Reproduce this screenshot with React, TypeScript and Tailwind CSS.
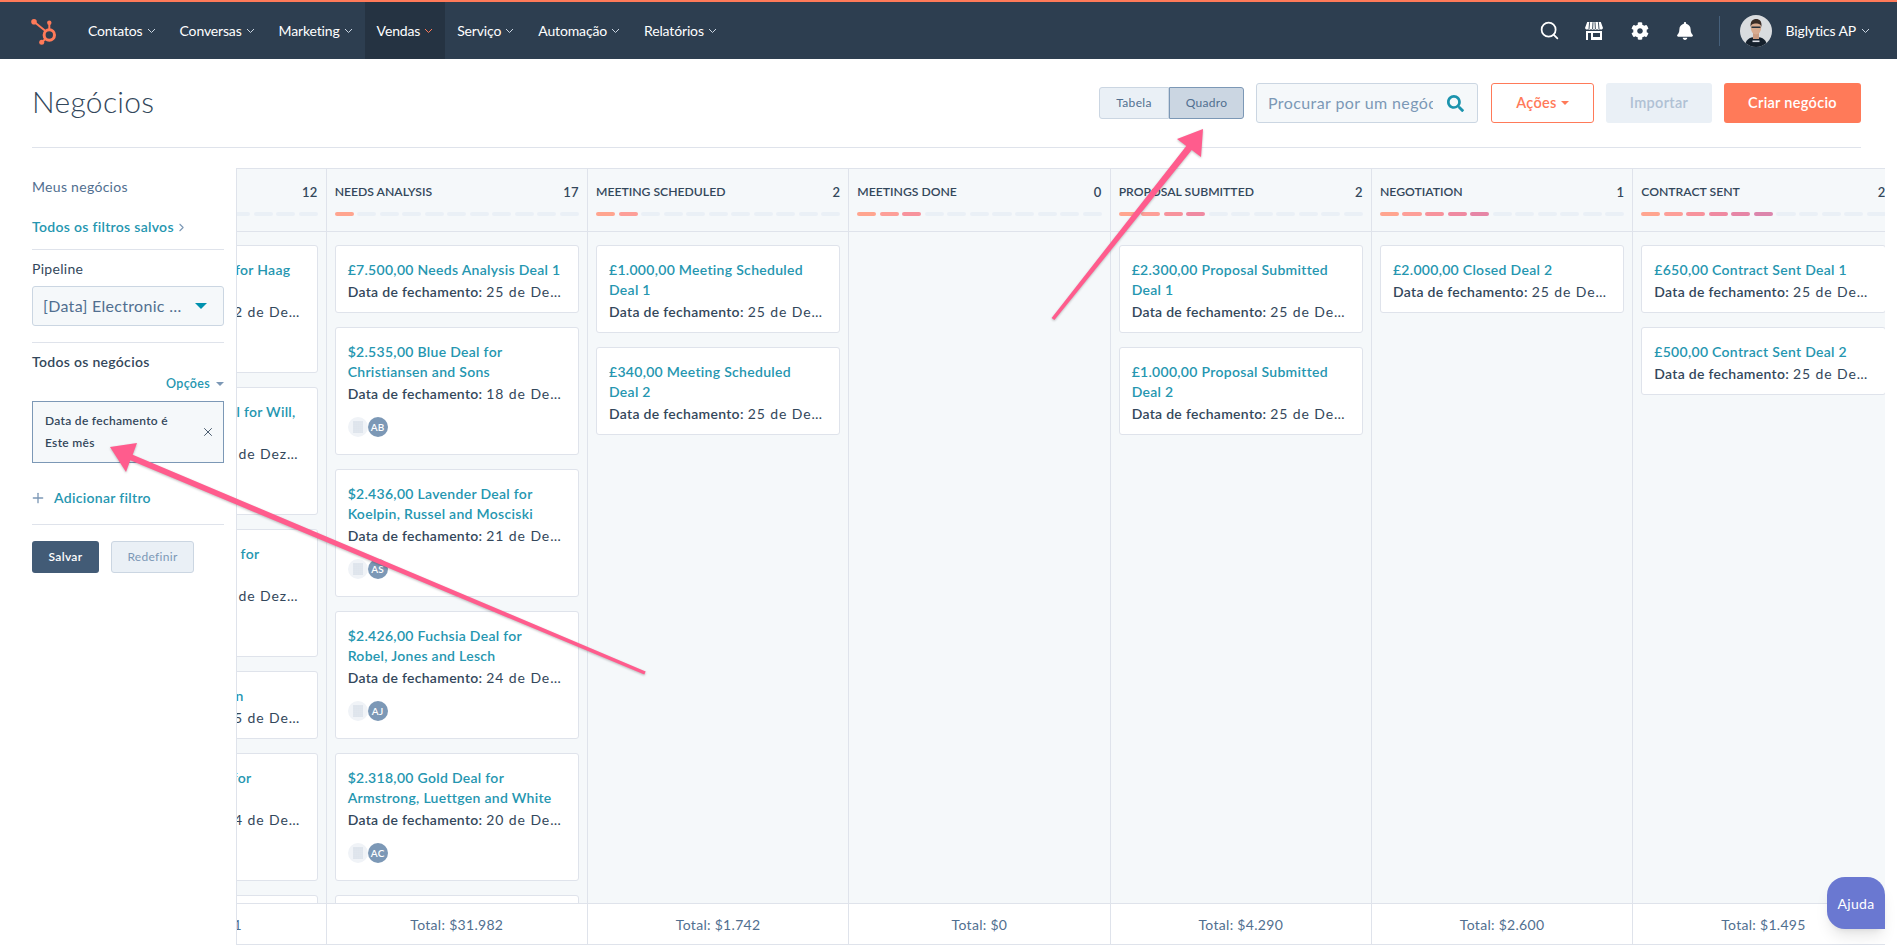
import { ChevronRight, Plus, Search, X } from "lucide-react";
import { FaBell, FaCog, FaSearch } from "react-icons/fa";

type Deal = {
  title: string;
  date: string;
  initials?: string;
};

type Stage = {
  name: string;
  count: number;
  lit: number;
  total: string;
  deals: Deal[];
};

const SEGMENT_COLORS = ["bg-[#ffa58f]", "bg-[#fd9f98]", "bg-[#f7939c]", "bg-[#ef8aa1]", "bg-[#e686a6]", "bg-[#dc86ac]"];

const NAV_ITEMS = ["Contatos", "Conversas", "Marketing", "Vendas", "Serviço", "Automação", "Relatórios"];

const STAGES: Stage[] = [
  {
    name: "QUALIFIED",
    count: 12,
    lit: 0,
    total: "Total: $28.341",
    deals: [
      { title: "$2.700,00 Yellow Deal for Haag\nand Sons", date: "22 de Dezembro", initials: "JH" },
      { title: "$2.650,00 Maroon Deal for Will,\nKling", date: "3 de Dezembro", initials: "TW" },
      { title: "$2.600,00 Salmon Deal for\nHintz and Kuhlman", date: "9 de Dezembro", initials: "RK" },
      { title: "$2.550,00 Red Deal Ann", date: "15 de Dezembro" },
      { title: "$2.500,00 Green Deal for\nWisozk and Ward", date: "14 de Dezembro", initials: "LW" },
      { title: "$2.450,00 Plum Deal", date: "12 de Dezembro" },
    ],
  },
  {
    name: "NEEDS ANALYSIS",
    count: 17,
    lit: 1,
    total: "Total: $31.982",
    deals: [
      { title: "£7.500,00 Needs Analysis Deal 1", date: "25 de Dezembro" },
      { title: "$2.535,00 Blue Deal for\nChristiansen and Sons", date: "18 de Dezembro", initials: "AB" },
      { title: "$2.436,00 Lavender Deal for\nKoelpin, Russel and Mosciski", date: "21 de Dezembro", initials: "AS" },
      { title: "$2.426,00 Fuchsia Deal for\nRobel, Jones and Lesch", date: "24 de Dezembro", initials: "AJ" },
      { title: "$2.318,00 Gold Deal for\nArmstrong, Luettgen and White", date: "20 de Dezembro", initials: "AC" },
      { title: "$2.210,00 Olive Deal", date: "19 de Dezembro" },
    ],
  },
  {
    name: "MEETING SCHEDULED",
    count: 2,
    lit: 2,
    total: "Total: $1.742",
    deals: [
      { title: "£1.000,00 Meeting Scheduled\nDeal 1", date: "25 de Dezembro" },
      { title: "£340,00 Meeting Scheduled\nDeal 2", date: "25 de Dezembro" },
    ],
  },
  { name: "MEETINGS DONE", count: 0, lit: 3, total: "Total: $0", deals: [] },
  {
    name: "PROPOSAL SUBMITTED",
    count: 2,
    lit: 4,
    total: "Total: $4.290",
    deals: [
      { title: "£2.300,00 Proposal Submitted\nDeal 1", date: "25 de Dezembro" },
      { title: "£1.000,00 Proposal Submitted\nDeal 2", date: "25 de Dezembro" },
    ],
  },
  {
    name: "NEGOTIATION",
    count: 1,
    lit: 5,
    total: "Total: $2.600",
    deals: [{ title: "£2.000,00 Closed Deal 2", date: "25 de Dezembro" }],
  },
  {
    name: "CONTRACT SENT",
    count: 2,
    lit: 6,
    total: "Total: $1.495",
    deals: [
      { title: "£650,00 Contract Sent Deal 1", date: "25 de Dezembro" },
      { title: "£500,00 Contract Sent Deal 2", date: "25 de Dezembro" },
    ],
  },
];

function Sprocket() {
  return (
    <svg width="28" height="32" viewBox="0 0 28 32" className="shrink-0">
      <g stroke="#ff7a59" fill="none">
        <circle cx="19.3" cy="20" r="5.2" strokeWidth="3" />
        <path d="M4 6.7 L15.5 16" strokeWidth="2" />
        <path d="M19.3 8 L19.3 14" strokeWidth="2" />
        <path d="M11.7 27.3 L16 23.5" strokeWidth="2" />
      </g>
      <g fill="#ff7a59">
        <circle cx="4" cy="6.7" r="2.8" />
        <circle cx="19.3" cy="7.7" r="2.2" />
        <circle cx="11.7" cy="27.3" r="2.5" />
      </g>
    </svg>
  );
}

function NavChevron({ color }: { color: string }) {
  return (
    <svg width="9" height="6" viewBox="0 0 9 6" fill="none" stroke={color} strokeWidth="1">
      <path d="M1 1l3.500 3.500L8 1" />
    </svg>
  );
}

function StoreIcon() {
  return (
    <svg width="20" height="20" viewBox="0 0 20 20" fill="#fff">
      <path d="M3.2 1h13.6l2.2 6a2 2 0 0 1-3 1.3 3 3 0 0 1-3 0 3 3 0 0 1-3 0 3 3 0 0 1-3 0 3 3 0 0 1-3 0A2 2 0 0 1 1 7z" />
      <path d="M5.600 1.200 5 8M9 1.200 8.600 8M11 1.200l.4 6.800M14.400 1.200 15 8" stroke="#2d3e50" strokeWidth="0.9" fill="none" />
      <path fillRule="evenodd" d="M2 10h16v9H2zM4 12v7h3v-7zM9 12v4h7v-4z" />
    </svg>
  );
}

function UserPhoto() {
  return (
    <svg width="32" height="32" viewBox="0 0 32 32" className="rounded-full shrink-0">
      <rect width="32" height="32" fill="#d9dcdf" />
      <path d="M5 32c0-7 4-10 11-10s11 3 11 10z" fill="#15202c" />
      <rect x="13" y="17" width="6" height="7" fill="#c99a80" />
      <ellipse cx="16" cy="13" rx="5.200" ry="6.500" fill="#d8ab90" />
      <path d="M10.600 12c-.6-6 2.400-8 5.600-8s6 2 5.200 8c-.8-2.600-2-3.400-5.400-3.400S11.400 9.400 10.600 12z" fill="#3a2c26" />
      <rect x="11.500" y="11.500" width="9" height="1.500" fill="#28323c" />
      <rect x="12.500" y="25.500" width="7" height="1.600" fill="#dfe3eb" />
    </svg>
  );
}

function BuildingAvatar() {
  return (
    <span className="w-5 h-5 rounded-full bg-[#f0f3f7] flex items-center justify-center">
      <svg width="10" height="14" viewBox="0 0 10 14" fill="none" stroke="#d5dde7" strokeWidth="0.8">
        <path d="M1 1v12M3 1v12M5 1v12M7 1v12M9 1v12M0 2h10M0 4h10M0 6h10M0 8h10M0 10h10M0 12h10" />
      </svg>
    </span>
  );
}

function DealCard({ deal }: { deal: Deal }) {
  return (
    <div className="bg-white border border-[#dfe3eb] rounded-[3px] px-[12px] pt-[14px] pb-[10px] shrink-0">
      <div className="text-[14px] leading-[20px] font-semibold text-[#2596b0] whitespace-pre-line">{deal.title}</div>
      <div className="text-[14px] leading-[20px] mt-[2px] mr-[5px] text-[#33475b] truncate">
        <span className="font-semibold">Data de fechamento:</span>{" "}
        <span className="tracking-[0.9px]">{deal.date}</span>
      </div>
      {deal.initials && (
        <div className="flex items-center mt-[13px] mb-[7px]">
          <BuildingAvatar />
          <span className="w-5 h-5 rounded-full bg-[#7c98b6] text-white text-[10px] font-semibold flex items-center justify-center">
            {deal.initials}
          </span>
        </div>
      )}
    </div>
  );
}

function StageColumn({ stage }: { stage: Stage }) {
  return (
    <div className="w-[261.33px] shrink-0 h-full flex flex-col border-l border-[#dfe3eb]">
      <div className="h-[63px] shrink-0 border-b border-[#dfe3eb] pl-[8px] pr-[8px] pt-[13px]">
        <div className="flex items-center justify-between leading-[20px] font-semibold text-[#33475b]">
          <span className="text-[12.2px] tracking-normal">{stage.name}</span>
          <span className="text-[13px]">{stage.count}</span>
        </div>
        <div className="flex gap-[3.5px] mt-[10px]">
          {Array.from({ length: 11 }).map((_, i) => (
            <span
              key={i}
              className={`h-[4px] flex-1 rounded-full ${i < stage.lit ? SEGMENT_COLORS[i] : "bg-[#eaf0f6]"}`}
            />
          ))}
        </div>
      </div>
      <div className="flex-1 min-h-0 overflow-hidden pl-[8px] pr-[8px] pt-[13px] flex flex-col gap-[14px]">
        {stage.deals.map((deal) => (
          <DealCard key={deal.title} deal={deal} />
        ))}
      </div>
      <div className="h-[41px] shrink-0 bg-white border-t border-[#dfe3eb] flex items-center justify-center text-[14px] text-[#516f90]">
        {stage.total}
      </div>
    </div>
  );
}

function Divider() {
  return <div className="h-px bg-[#dfe3eb]" />;
}

function Sidebar() {
  return (
    <aside className="w-[236px] shrink-0 pl-8 pr-[12px] pt-[9px] text-[14px] leading-[20px]">
      <div className="text-[#516f90]">Meus negócios</div>
      <div className="mt-[20px] mb-[12px] flex items-center gap-[1px] font-semibold text-[#2596b0]">
        Todos os filtros salvos <ChevronRight size={13} className="text-[#7c98b6]" />
      </div>
      <Divider />
      <div className="mt-[9px] text-[#33475b]">Pipeline</div>
      <div className="mt-[7px] h-[40px] bg-[#f5f8fa] border border-[#cbd6e2] rounded-[3px] flex items-center pl-[10px] pr-[16px] justify-between">
        <span className="text-[16px] text-[#516f90]">[Data] Electronic …</span>
        <span className="w-0 h-0 border-x-[6px] border-x-transparent border-t-[6px] border-t-[#0091ae]" />
      </div>
      <div className="mt-[16px]">
        <Divider />
      </div>
      <div className="mt-[9px] font-semibold text-[#33475b]">Todos os negócios</div>
      <div className="mt-[2px] flex items-center justify-end gap-[6px] text-[12.5px] font-semibold text-[#2596b0]">
        Opções
        <span className="w-0 h-0 border-x-[4px] border-x-transparent border-t-[4px] border-t-[#7c98b6]" />
      </div>
      <div className="mt-[7px] h-[62px] bg-[#f5f8fa] border border-[#7c98b6] flex items-center justify-between pl-[12px] pr-[8px]">
        <div className="text-[12px] leading-[22px] font-semibold text-[#33475b]">
          <div>Data de fechamento é</div>
          <div>Este mês</div>
        </div>
        <X size={14} strokeWidth={1.5} className="text-[#33475b]" />
      </div>
      <div className="mt-[25px] flex items-center gap-[8px] font-semibold text-[#2596b0]">
        <Plus size={16} className="-ml-[2px] text-[#7c98b6]" />
        Adicionar filtro
      </div>
      <div className="mt-[16px]">
        <Divider />
      </div>
      <div className="mt-[16px] flex gap-[12px]">
        <button className="w-[67px] h-[32px] bg-[#425b76] rounded-[3px] text-white text-[12px] font-semibold">Salvar</button>
        <button className="w-[83px] h-[32px] bg-[#eaf0f6] border border-[#cbd6e2] rounded-[3px] text-[#7c98b6] text-[12px]">
          Redefinir
        </button>
      </div>
    </aside>
  );
}

export default function App() {
  return (
    <div className="relative h-screen flex flex-col overflow-hidden bg-white tracking-[0.3px] font-['Lato','Liberation_Sans',sans-serif]">
      <nav className="h-[59px] shrink-0 border-t-2 border-[#ff7a59] bg-[#2d3e50] flex items-stretch text-white tracking-[-0.15px]">
        <div className="w-[76px] shrink-0 flex items-center pl-[30px]">
          <Sprocket />
        </div>
        {NAV_ITEMS.map((item) => (
          <div
            key={item}
            className={`flex items-center gap-[4px] px-[12px] text-[14px] ${item === "Vendas" ? "bg-[#253342]" : ""}`}
          >
            {item}
            <NavChevron color={item === "Vendas" ? "#ff7a59" : "#cbd6e2"} />
          </div>
        ))}
        <div className="ml-auto flex items-center pr-[27px]">
          <span className="w-[45px] flex justify-center">
            <Search size={21} strokeWidth={2} />
          </span>
          <span className="w-[45px] flex justify-center">
            <StoreIcon />
          </span>
          <span className="w-[45px] flex justify-center ml-[1px]">
            <FaCog size={18} />
          </span>
          <span className="w-[45px] flex justify-center">
            <FaBell size={18} />
          </span>
          <span className="ml-[11px] w-px h-[30px] bg-[#46607b]" />
          <span className="ml-[20px]">
            <UserPhoto />
          </span>
          <span className="ml-[14px] mr-[5px] text-[14px]">Biglytics AP</span>
          <NavChevron color="#cbd6e2" />
        </div>
      </nav>

      <header className="ml-8 mr-[36px] h-[89px] shrink-0 border-b border-[#dfe3eb] flex items-start justify-between">
        <h1 className="mt-[22px] text-[30px] leading-[40px] font-light text-[#33475b]">Negócios</h1>
        <div className="mt-[24px] flex items-center">
          <div className="flex h-[32px] text-[12px] text-[#516f90]">
            <span className="w-[70px] bg-[#eaf0f6] border border-[#cbd6e2] rounded-l-[3px] flex items-center justify-center">
              Tabela
            </span>
            <span className="w-[75px] bg-[#cbd6e2] border border-[#7c98b6] rounded-r-[3px] flex items-center justify-center">
              Quadro
            </span>
          </div>
          <div className="ml-[12px] w-[222px] h-[40px] bg-[#f5f8fa] border border-[#cbd6e2] rounded-[3px] flex items-center pl-[11px] pr-[13px]">
            <input
              readOnly
              placeholder="Procurar por um negócio"
              className="min-w-0 flex-1 bg-transparent text-[16px] tracking-[0.4px] outline-none placeholder:text-[#7c98b6]"
            />
            <FaSearch size={17} className="ml-[14px] text-[#1b93ad]" />
          </div>
          <button className="ml-[13px] w-[103px] h-[40px] bg-white border border-[#ff7a59] rounded-[3px] text-[14.5px] font-semibold text-[#ff7a59] flex items-center justify-center gap-[4px]">
            Ações
            <span className="w-0 h-0 border-x-[4px] border-x-transparent border-t-[4px] border-t-[#ff7a59]" />
          </button>
          <button className="ml-[12px] w-[106px] h-[40px] bg-[#eaf0f6] rounded-[3px] text-[14.5px] font-semibold text-[#b0c1d4]">
            Importar
          </button>
          <button className="ml-[12px] w-[137px] h-[40px] bg-[#ff7a59] rounded-[3px] text-[14.5px] font-semibold text-white">
            Criar negócio
          </button>
        </div>
      </header>

      <div className="mt-[20px] flex-1 min-h-0 flex">
        <Sidebar />
        <main className="w-[1649px] shrink-0 overflow-hidden bg-[#f5f8fa] border-t border-b border-l border-[#dfe3eb]">
          <div className="flex h-full ml-[-172.7px]">
            {STAGES.map((stage) => (
              <StageColumn key={stage.name} stage={stage} />
            ))}
          </div>
        </main>
      </div>

      {/* pink annotation arrows drawn on top of the screenshot */}
      <svg className="absolute inset-0 w-full h-full pointer-events-none drop-shadow-[0_1px_1px_rgba(0,0,0,0.25)]">
        <polygon
          fill="#ff5c8d"
          points="1051.6,317.9 1186.3,145.9 1177,139 1203,129 1201,157 1191.7,150.1 1054.4,320.1"
        />
        <polygon
          fill="#ff5c8d"
          points="645.7,671.4 132.7,454.7 137,443 110,447 126,472 130.3,460.3 644.3,674.6"
        />
      </svg>

      <button className="absolute left-[1827px] top-[877px] w-[58px] h-[52px] bg-[#6a78d1] rounded-[18px] rounded-br-none text-white text-[14px] shadow-lg">
        Ajuda
      </button>
    </div>
  );
}
